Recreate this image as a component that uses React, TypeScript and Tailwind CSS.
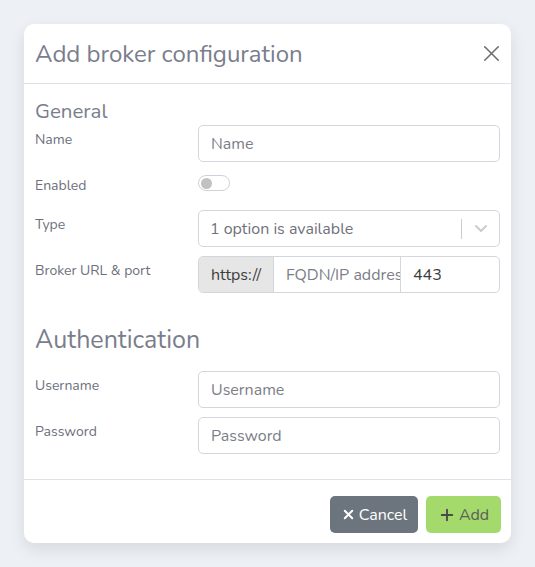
import { X, Plus } from 'lucide-react';

const font = { fontFamily: 'Nunito, Lato, "Noto Sans", sans-serif' };

function Label({ text, className = 'pt-[5px]' }: { text: string; className?: string }) {
  return <div className={`text-[14px] leading-[20px] text-[#6c6f7c] ${className}`}>{text}</div>;
}

function TextInput({ placeholder }: { placeholder: string }) {
  return (
    <div className="flex h-[37px] items-center rounded-[5px] border border-[#d3d6dc] px-[12px] text-[16px] text-[#7b7e87]">
      {placeholder}
    </div>
  );
}

export default function App() {
  return (
    <div className="min-h-[567px] bg-[#edf1f5] pt-[24px]" style={font}>
      <div className="ml-[24px] w-[487px] rounded-[10px] bg-white shadow-[0_6px_16px_rgba(0,0,0,0.10)]">
        <div className="flex h-[60px] items-center justify-between border-b border-[#dee1e6] pl-[11px] pr-[6px]">
          <h2 className="text-[24px] text-[#7a7d8c]">Add broker configuration</h2>
          <X size={27} strokeWidth={1.4} className="text-[#6f6f6f]" />
        </div>

        <div className="px-[11px] pb-[25px] pt-[15px]">
          <h3 className="text-[20.5px] leading-[24px] text-[#7a7d8c]">General</h3>

          <div className="mt-[2px] grid grid-cols-[163px_1fr]">
            <Label text="Name" />
            <TextInput placeholder="Name" />
          </div>

          <div className="mt-[11px] grid grid-cols-[163px_1fr]">
            <Label text="Enabled" className="pt-[3px]" />
            <div className="pt-[2px]">
              <div className="flex h-[16px] w-[32px] items-center rounded-full border border-[#cfd3d8] px-[2px]">
                <div className="h-[11px] w-[11px] rounded-full bg-[#c2c2c2]" />
              </div>
            </div>
          </div>

          <div className="mt-[14px] grid grid-cols-[163px_1fr]">
            <Label text="Type" />
            <div className="flex h-[37px] items-center rounded-[5px] border border-[#d3d6dc] pl-[11px] text-[16px] text-[#6f727b]">
              <span className="flex-1">1 option is available</span>
              <div className="h-[20px] w-px bg-[#cccccc]" />
              <div className="flex w-[37px] items-center justify-center">
                <svg width="14" height="9" viewBox="0 0 14 9" fill="none">
                  <path d="M2 2l5 5 5-5" stroke="#cccccc" strokeWidth="2" strokeLinecap="round" strokeLinejoin="round" />
                </svg>
              </div>
            </div>
          </div>

          <div className="mt-[9px] grid grid-cols-[163px_1fr]">
            <Label text="Broker URL & port" />
            <div className="flex h-[37px] overflow-hidden rounded-[5px] border border-[#d3d6dc] text-[16px]">
              <div className="flex w-[75px] items-center justify-center border-r border-[#d3d6dc] bg-[#e6e6e6] text-[#3d3d3d]">
                https://
              </div>
              <div className="flex w-[127px] items-center overflow-hidden whitespace-nowrap border-r border-[#d3d6dc] pl-[12px] text-[#7b7e87]">
                FQDN/IP address
              </div>
              <div className="flex flex-1 items-center pl-[12px] text-[#3d3d3d]">443</div>
            </div>
          </div>

          <h3 className="mt-[33px] text-[25px] leading-[28px] text-[#7a7d8c]">Authentication</h3>

          <div className="mt-[17px] grid grid-cols-[163px_1fr]">
            <Label text="Username" />
            <TextInput placeholder="Username" />
          </div>

          <div className="mt-[9px] grid grid-cols-[163px_1fr]">
            <Label text="Password" />
            <TextInput placeholder="Password" />
          </div>
        </div>

        <div className="flex justify-end gap-[8px] border-t border-[#dee1e6] pb-[10px] pr-[10px] pt-[16px]">
          <button className="flex h-[37px] w-[88px] items-center justify-center gap-[3px] rounded-[5px] bg-[#6c757d] text-[16px] text-white">
            <X size={15} strokeWidth={3.2} />
            Cancel
          </button>
          <button className="flex h-[37px] w-[75px] items-center justify-center gap-[3px] rounded-[5px] bg-[#a4d96c] text-[16px] text-[#5b5e5a]">
            <Plus size={18} strokeWidth={2.5} className="text-[#4a4a4a]" />
            Add
          </button>
        </div>
      </div>
    </div>
  );
}
